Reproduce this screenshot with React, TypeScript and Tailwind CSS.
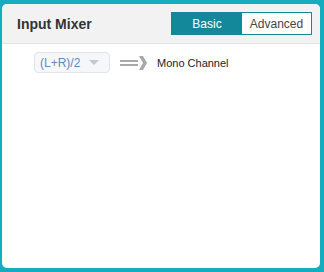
export default function App() {
  return (
    <div className="h-[272px] w-[324px] bg-[#13adbf] pl-[2px] pr-[4px] pt-[4px] pb-[4px] font-['Liberation_Sans',Arial,sans-serif]">
      <div className="flex h-full flex-col overflow-hidden rounded-[5px] bg-white">
        {/* Header */}
        <div className="flex h-[40px] items-center justify-between border-b border-[#e3e3e3] bg-[#f2f2f2] pl-[15px] pr-[8px]">
          <h1 className="pt-[2px] text-[14px] font-bold text-[#333]">Input Mixer</h1>
          <div className="flex h-[23px] border border-[#12889a]">
            <button className="w-[70px] bg-[#12889a] text-[12px] text-white">Basic</button>
            <button className="w-[69px] bg-white text-[12px] text-[#444]">Advanced</button>
          </div>
        </div>

        {/* Body */}
        <div className="flex items-center pl-[32px] pt-[8px]">
          <div className="flex h-[21px] w-[76px] items-center justify-between rounded-[4px] border border-[#dfe4ee] bg-[#f5f7fb] pl-[5px] pr-[10px]">
            <span className="text-[12px] text-[#5a8bc6]">(L+R)/2</span>
            <svg width="10" height="5" viewBox="0 0 10 5">
              <path d="M0 0h10L5 5z" fill="#c4c8d0" />
            </svg>
          </div>
          <svg className="ml-[10px]" width="27" height="14" viewBox="0 0 27 14">
            <rect x="0" y="4" width="18" height="2" fill="#a8a8a8" />
            <rect x="0" y="8" width="18" height="2" fill="#a8a8a8" />
            <path d="M19 0h4l4 7-4 7h-4l4-7z" fill="#a8a8a8" />
          </svg>
          <span className="ml-[10px] pt-[1px] text-[11px] text-[#222]">Mono Channel</span>
        </div>
      </div>
    </div>
  );
}
